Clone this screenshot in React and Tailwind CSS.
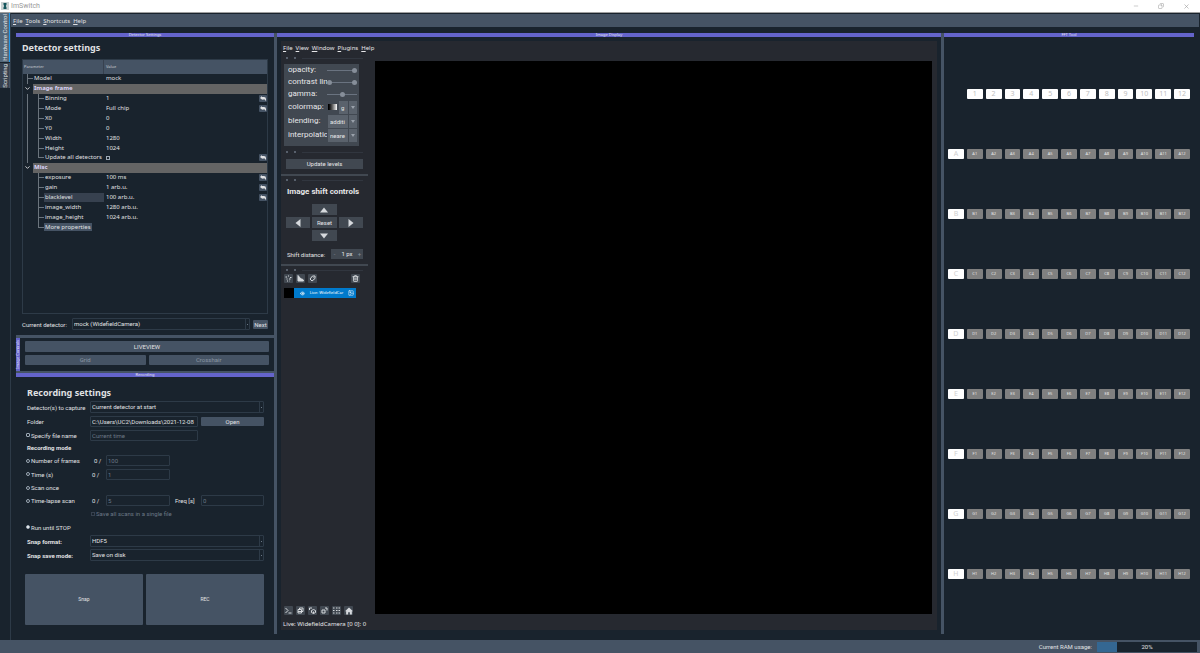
import React from "react";
import { ChevronDown, Image, Eye, Trash2, Minus, X, Copy } from "lucide-react";

const params = [
  { name: "Model", value: "mock", level: 0 },
  { name: "Image frame", group: true },
  { name: "Binning", value: "1", level: 1, reset: true, trunk: true },
  { name: "Mode", value: "Full chip", level: 1, reset: true, trunk: true },
  { name: "X0", value: "0", level: 1, trunk: true },
  { name: "Y0", value: "0", level: 1, trunk: true },
  { name: "Width", value: "1280", level: 1, trunk: true },
  { name: "Height", value: "1024", level: 1, trunk: true },
  { name: "Update all detectors", check: true, level: 1, reset: true, trunk: true, last: true },
  { name: "Misc", group: true },
  { name: "exposure", value: "100 ms", level: 1, reset: true },
  { name: "gain", value: "1 arb.u.", level: 1, reset: true },
  { name: "blacklevel", value: "100 arb.u.", level: 1, reset: true, hover: true },
  { name: "image_width", value: "1280 arb.u.", level: 1 },
  { name: "image_height", value: "1024 arb.u.", level: 1 },
  { name: "More properties", button: true, level: 1, last: true },
];

const columns = [1, 2, 3, 4, 5, 6, 7, 8, 9, 10, 11, 12];
const wellRows = ["A", "B", "C", "D", "E", "F", "G", "H"];

function DockTitle({ children }) {
  return (
    <div className="flex h-[4px] shrink-0 items-center justify-center bg-[#6464cb] font-['Noto_Sans',sans-serif] text-[4px] leading-[4px] text-[#e4e4f6]">
      {children}
    </div>
  );
}

function Menu({ items, className }) {
  return (
    <nav className={`flex items-center gap-[3px] font-['Noto_Sans',sans-serif] text-[6px] ${className}`}>
      {items.map((item) => (
        <button key={item} className="leading-[10px]">
          <span className="underline">{item[0]}</span>
          {item.slice(1)}
        </button>
      ))}
    </nav>
  );
}

function Branch({ last, className }) {
  return (
    <span className={`flex w-[6px] shrink-0 flex-col self-stretch ${className}`}>
      <span className="flex-1 border-b border-l border-[#6b747d]" />
      <span className={last ? "flex-1" : "flex-1 border-l border-[#6b747d]"} />
    </span>
  );
}

function ParamRow({ row }) {
  if (row.group) {
    return (
      <tr className="flex items-stretch">
        <td className="flex w-[10px] items-center pl-px">
          <ChevronDown className="size-[7px] text-[#e0e1e3]" strokeWidth={3} />
        </td>
        <td className="flex flex-1 items-center bg-[#646464] pl-px font-bold text-[#dcd6fa]">{row.name}</td>
      </tr>
    );
  }
  return (
    <tr className="flex items-stretch">
      <td className="flex w-[81px] items-center whitespace-nowrap">
        {row.level === 0 ? (
          <Branch className="ml-[4px]" />
        ) : (
          <>
            <span className={`ml-[4px] w-[6px] shrink-0 self-stretch ${row.trunk ? "border-l border-[#6b747d]" : ""}`} />
            <Branch last={row.last} className="ml-[5px]" />
          </>
        )}
        {row.button ? (
          <button className="bg-[#455364] px-px leading-[8px]">{row.name}</button>
        ) : (
          <span className={`flex flex-1 items-center self-stretch pl-px ${row.hover ? "bg-[#37414f]" : ""}`}>
            {row.check ? <label htmlFor="update-all">{row.name}</label> : row.name}
          </span>
        )}
      </td>
      <td className="flex flex-1 items-center justify-between pl-[2px]">
        {row.check ? (
          <input id="update-all" type="checkbox" className="size-[4px] appearance-none border border-[#9da9b5]" />
        ) : (
          <span>{row.value}</span>
        )}
        {row.reset && (
          <button aria-label={`Reset ${row.name}`} className="flex h-[7px] w-[8px] items-center justify-center rounded-[1px] bg-[#455364]">
            <svg viewBox="0 0 6 5" className="h-[5px] w-[6px]" fill="#e0e1e3">
              <path d="M0 2 2 0v1h2a2 2 0 0 1 2 2v1.500H5V3.500H2.500V4z" />
            </svg>
          </button>
        )}
      </td>
    </tr>
  );
}

function DetectorSettings() {
  return (
    <section className="flex flex-1 flex-col">
      <DockTitle>Detector Settings</DockTitle>
      <div className="flex flex-1 flex-col px-[6px] pb-[5px]">
        <h2 className="h-[22px] font-['Noto_Sans',sans-serif] text-[9px] leading-[22px] font-bold">Detector settings</h2>
        <div className="flex-1 border border-[#2d3a47] font-['Noto_Sans',sans-serif]">
          <table className="block w-full">
            <thead className="block">
              <tr className="flex h-[14px] items-center bg-[#455364] text-left text-[4px] text-[#c9cdd2]">
                <th className="w-[81px] border-r border-[#37414f] pl-px leading-[14px] font-normal">Parameter</th>
                <th className="pl-[2px] font-normal">Value</th>
              </tr>
            </thead>
            <tbody className="grid h-[158px] auto-rows-fr text-[6px] leading-[9px]">
              {params.map((row) => (
                <ParamRow key={row.name} row={row} />
              ))}
            </tbody>
          </table>
        </div>
        <div className="mt-[4px] flex h-[12px] items-center">
          <label htmlFor="detector" className="w-[50px] text-[6px]">Current detector:</label>
          <Combo id="detector" value="mock (WidefieldCamera)" />
          <button className="ml-[3px] h-[9px] w-[15px] rounded-[1px] bg-[#455364] text-[6px] leading-[9px]">Next</button>
        </div>
      </div>
    </section>
  );
}

function Combo({ id, value }) {
  return (
    <div className="flex h-[12px] flex-1 items-stretch rounded-[1px] border border-[#2d3a47]">
      <select id={id} className="min-w-0 flex-1 appearance-none px-px text-[6px] leading-[10px]">
        <option>{value}</option>
      </select>
      <span className="flex w-[4px] items-center justify-center border-l border-[#2d3a47]">
        <span className="size-px bg-[#6b7886]" />
      </span>
    </div>
  );
}

function ImageControls() {
  return (
    <section className="flex h-[33px] shrink-0">
      <div className="flex w-[4px] items-center justify-center bg-[#6464cb]">
        <span className="rotate-180 font-['Noto_Sans',sans-serif] text-[4px] leading-[4px] whitespace-nowrap text-[#e4e4f6] [writing-mode:vertical-rl]">
          Image Controls
        </span>
      </div>
      <div className="grid flex-1 grid-cols-2 content-start gap-[3px] px-[5px] pt-[3px] text-[6px] leading-[10px]">
        <button className="col-span-2 h-[11px] rounded-[1px] bg-[#455364]">LIVEVIEW</button>
        <button className="h-[10px] rounded-[1px] bg-[#455364] text-[#8a96a3]">Grid</button>
        <button className="h-[10px] rounded-[1px] bg-[#455364] text-[#8a96a3]">Crosshair</button>
      </div>
    </section>
  );
}

function Field({ className, ...props }) {
  return (
    <input
      className={`h-[11px] min-w-0 rounded-[1px] border border-[#2d3a47] px-px text-[6px] leading-[9px] placeholder:text-[#6b7886] ${className}`}
      {...props}
    />
  );
}

function Mode({ id, label, checked }) {
  return (
    <label htmlFor={id} className="-ml-px flex w-[64px] items-center gap-px">
      <input
        id={id}
        type="radio"
        name="mode"
        defaultChecked={checked}
        className="size-[4px] appearance-none rounded-full border border-[#9da9b5] checked:bg-white"
      />
      {label}
    </label>
  );
}

function Recording() {
  return (
    <section className="flex h-[261px] shrink-0 flex-col">
      <DockTitle>Recording</DockTitle>
      <div className="flex flex-1 flex-col pr-[10px] pl-[11px] text-[6px]">
        <h2 className="h-[23px] pt-[6px] font-['Noto_Sans',sans-serif] text-[9px] leading-[20px] font-bold">Recording settings</h2>
        <div className="flex h-[14px] items-center">
          <label htmlFor="capture" className="w-[63px]">Detector(s) to capture</label>
          <Combo id="capture" value="Current detector at start" />
        </div>
        <div className="flex h-[14px] items-center">
          <label htmlFor="folder" className="w-[63px]">Folder</label>
          <Field id="folder" className="w-[108px]" defaultValue="C:\Users\UC2\Downloads\2021-12-08" />
          <button className="ml-[3px] h-[9px] flex-1 rounded-[1px] bg-[#455364]">Open</button>
        </div>
        <div className="flex h-[14px] items-center">
          <label htmlFor="specify" className="-ml-px flex w-[64px] items-center gap-px">
            <input id="specify" type="checkbox" className="size-[4px] appearance-none rounded-[1px] border border-[#9da9b5]" />
            Specify file name
          </label>
          <Field aria-label="File name" className="w-[108px]" placeholder="Current time" />
        </div>
        <h3 className="h-[12px] leading-[12px] font-bold">Recording mode</h3>
        <div className="flex h-[13px] items-center">
          <Mode id="frames" label="Number of frames" />
          <span className="w-[16px] pl-[4px]">0 /</span>
          <Field aria-label="Frames" className="w-[64px]" placeholder="100" />
        </div>
        <div className="flex h-[14px] items-center">
          <Mode id="time" label="Time (s)" />
          <span className="w-[16px] pl-[2px]">0 /</span>
          <Field aria-label="Seconds" className="w-[64px]" placeholder="1" />
        </div>
        <div className="flex h-[13px] items-center">
          <Mode id="scan" label="Scan once" />
        </div>
        <div className="flex h-[13px] items-center">
          <Mode id="lapse" label="Time-lapse scan" />
          <span className="w-[16px] pl-[2px]">0 /</span>
          <Field aria-label="Time points" className="w-[64px]" placeholder="5" />
          <label htmlFor="freq" className="w-[31px] pl-[5px]">Freq [s]</label>
          <Field id="freq" className="flex-1" placeholder="0" />
        </div>
        <div className="flex h-[13px] items-center pl-[64px]">
          <label htmlFor="single" className="flex items-center gap-px text-[#6b7886]">
            <input id="single" type="checkbox" disabled className="size-[4px] appearance-none border border-[#37414f]" />
            Save all scans in a single file
          </label>
        </div>
        <div className="flex h-[14px] items-center">
          <Mode id="stop" label="Run until STOP" checked />
        </div>
        <div className="flex h-[14px] items-center">
          <label htmlFor="format" className="w-[63px] font-bold">Snap format:</label>
          <Combo id="format" value="HDF5" />
        </div>
        <div className="flex h-[14px] items-center">
          <label htmlFor="save" className="w-[63px] font-bold">Snap save mode:</label>
          <Combo id="save" value="Save on disk" />
        </div>
        <div className="mt-[12px] -ml-[2px] grid h-[51px] grid-cols-2 gap-[3px] text-[5px]">
          <button className="rounded-[1px] bg-[#455364]">Snap</button>
          <button className="rounded-[1px] bg-[#455364]">REC</button>
        </div>
      </div>
    </section>
  );
}

function Grip() {
  return (
    <div className="flex h-[6px] items-center gap-[6px] px-[5px]">
      <span className="size-[2px] rounded-full bg-[#6a7380]" />
      <span className="size-[2px] rounded-full bg-[#6a7380]" />
      <span className="h-px flex-1 bg-[#31363f]" />
    </div>
  );
}

function Slider({ label, range, value }) {
  return (
    <div className="flex h-[12px] items-center">
      <span className="w-[39px] overflow-hidden whitespace-nowrap">{label}</span>
      <div className="flex flex-1 items-center" role="group" aria-label={label}>
        {range && <span className="size-[5px] shrink-0 rounded-full bg-[#868e99]" />}
        <input
          type="range"
          aria-label={label}
          defaultValue={value}
          className="h-[5px] w-full min-w-0 appearance-none bg-linear-to-b from-transparent from-40% via-[#6a7380] via-50% to-transparent to-60% [&::-webkit-slider-thumb]:size-[5px] [&::-webkit-slider-thumb]:appearance-none [&::-webkit-slider-thumb]:rounded-full [&::-webkit-slider-thumb]:bg-[#868e99]"
        />
      </div>
    </div>
  );
}

function Drop({ label, value, swatch }) {
  return (
    <div className="flex h-[14px] items-center">
      <label htmlFor={label} className="mr-px w-[39px] shrink-0 overflow-hidden whitespace-nowrap">{label}</label>
      {swatch && <span className="mr-[2px] h-[6px] w-[9px] bg-linear-to-r from-black to-white" />}
      <div className="flex h-[13px] min-w-0 flex-1 items-center bg-[#5a626c]">
        <select id={label} className="min-w-0 flex-1 appearance-none pl-[2px] text-[6px]">
          <option>{value}</option>
        </select>
        <span className="flex h-full w-[9px] items-center justify-center border-l border-[#414851]">
          <svg viewBox="0 0 4 3" className="h-[3px] w-[4px]" fill="#9aa1aa"><path d="M0 0h4L2 3z" /></svg>
        </span>
      </div>
    </div>
  );
}

function Arrow({ label, d, className }) {
  return (
    <button aria-label={label} className={`flex h-[11px] items-center justify-center bg-[#414851] ${className}`}>
      <svg viewBox="0 0 8 8" className="size-[8px]" fill="#d6d9dd"><path d={d} /></svg>
    </button>
  );
}

function ToolButton({ label, children }) {
  return (
    <button aria-label={label} className="flex size-[9px] items-center justify-center rounded-[1px] bg-[#414851] text-[#d6d9dd]">
      {children}
    </button>
  );
}

function Glyph({ children }) {
  return (
    <svg viewBox="0 0 14 14" className="size-[7px]" fill="none" stroke="currentColor" strokeWidth="2">
      {children}
    </svg>
  );
}

function Napari() {
  return (
    <div className="mx-[4px] mt-[4px] mb-[4px] flex flex-1 flex-col bg-[#262930] text-[#e6e6e8]">
      <Menu items={["File", "View", "Window", "Plugins", "Help"]} className="h-[14px] px-[2px]" />
      <div className="flex flex-1">
        <aside className="flex w-[94px] shrink-0 flex-col pr-[7px]">
          <Grip />
          <div className="mt-[3px] mr-[9px] ml-[3px] flex h-[82px] flex-col bg-[#414851] pr-[2px] pl-[4px] text-[8px]">
            <Slider label="opacity:" value={100} />
            <Slider label="contrast limits:" range value={100} />
            <Slider label="gamma:" value={50} />
            <Drop label="colormap:" value="g" swatch />
            <Drop label="blending:" value="additi" />
            <Drop label="interpolation:" value="neare" />
          </div>
          <div className="pt-[3px]"><Grip /></div>
          <button className="mt-[4px] mr-[5px] ml-[5px] h-[10px] bg-[#414851] text-[6px] leading-[10px]">Update levels</button>
          <div className="mt-[5px] h-[2px] bg-[#414851]" />
          <div className="pt-px"><Grip /></div>
          <h2 className="mt-[3px] pl-[6px] text-[8px] leading-[12px] font-bold whitespace-nowrap">Image shift controls</h2>
          <div className="mt-[6px] mr-[5px] ml-[5px] grid grid-cols-3 gap-[2px] text-[6px]">
            <Arrow label="Up" d="M4 1.5 8 6.5H0z" className="col-start-2" />
            <Arrow label="Left" d="M1.5 4 6.5 0v8z" className="col-start-1" />
            <button className="h-[11px] bg-[#414851] leading-[11px]">Reset</button>
            <Arrow label="Right" d="M6.5 4 1.5 0v8z" className="" />
            <Arrow label="Down" d="M4 6.5 0 1.5h8z" className="col-start-2" />
          </div>
          <div className="mt-[8px] mr-[5px] ml-[6px] flex items-center justify-between text-[6px]">
            <label htmlFor="shift">Shift distance:</label>
            <div className="flex h-[10px] w-[32px] items-center bg-[#414851]">
              <button aria-label="Less" className="w-[7px] leading-[10px] text-[#868e99]">-</button>
              <input id="shift" defaultValue="1 px" className="w-[18px] text-center leading-[10px]" />
              <button aria-label="More" className="w-[7px] leading-[10px] text-[#868e99]">+</button>
            </div>
          </div>
          <div className="mt-[5px] h-[2px] bg-[#414851]" />
          <div className="pt-px"><Grip /></div>
          <div className="mt-px mr-[8px] ml-[3px] flex gap-[3px]">
            <ToolButton label="New points layer">
              <Glyph><path d="M1 4h3M6 2h2M10 5h3M3 8h2M8 8h3M4 12h2M9 12h1" /></Glyph>
            </ToolButton>
            <ToolButton label="New shapes layer">
              <Glyph><path d="M2 1v11h11a4 4 0 0 0-5-4z" fill="currentColor" /></Glyph>
            </ToolButton>
            <ToolButton label="New labels layer">
              <Glyph><path d="M7 2h5v5l-6 5-4-4zM9 5h1" /></Glyph>
            </ToolButton>
            <span className="flex-1" />
            <ToolButton label="Delete layer"><Trash2 className="size-[7px]" strokeWidth={3} /></ToolButton>
          </div>
          <div className="mt-[5px] mr-[12px] ml-[3px] flex h-[10px]">
            <span className="w-[10px] bg-black" />
            <div className="flex flex-1 items-center justify-between bg-[#007acc] pr-[2px] pl-[6px] font-['Noto_Sans',sans-serif] text-[4px] leading-[10px] whitespace-nowrap text-white">
              <Eye className="size-[5px] shrink-0" strokeWidth={3} />
              <span>Live: WidefieldCar</span>
              <Image className="size-[6px] shrink-0" />
            </div>
          </div>
          <div className="mt-auto ml-[3px] flex gap-[3px]">
            <ToolButton label="Console">
              <Glyph><path d="M1 2l5 5-5 5M7 12h6" /></Glyph>
            </ToolButton>
            <ToolButton label="Toggle 3D">
              <Glyph><path d="M2 5h7v7H2zM5 5V2h7v7H9M2 9h7" /></Glyph>
            </ToolButton>
            <ToolButton label="Roll dimensions">
              <Glyph><path d="M5 7l4-2 4 2v4l-4 2-4-2zM9 9v4M1 6V2h5" /></Glyph>
            </ToolButton>
            <ToolButton label="Transpose">
              <Glyph><path d="M2 6h6v6H2zM8 2h4v5" /></Glyph>
            </ToolButton>
            <ToolButton label="Grid">
              <Glyph><path d="M0 2h3M6 2h3M11 2h3M0 7h3M6 7h3M11 7h3M0 12h3M6 12h3M11 12h3" /></Glyph>
            </ToolButton>
            <ToolButton label="Home">
              <svg viewBox="0 0 14 14" className="size-[8px]" fill="currentColor">
                <path d="M7 1 0 7.500h2V13h3.500V9h3v4H12V7.500h2z" />
              </svg>
            </ToolButton>
          </div>
        </aside>
        <div className="mt-[6px] mr-[5px] mb-px flex-1 bg-black" />
      </div>
      <div className="h-[15px] px-[2px] font-['Noto_Sans',sans-serif] text-[6px] leading-[19px]">Live: WidefieldCamera [0 0]: 0</div>
    </div>
  );
}

function WellPlate() {
  return (
    <div className="flex flex-1 flex-col pt-[27px] pr-[4px] pb-[30px] pl-[4px] font-['Noto_Sans',sans-serif]">
      <div className="grid flex-1 auto-rows-fr grid-cols-13 items-center gap-x-[3px]">
        <span />
        {columns.map((c) => (
          <button key={c} className="h-[10px] rounded-[1px] bg-white text-[7px] leading-[10px] text-[#c0c0c0]">{c}</button>
        ))}
        {wellRows.map((r) => (
          <React.Fragment key={r}>
            <button className="h-[10px] rounded-[1px] bg-white text-[7px] leading-[10px] text-[#d0d0d0]">{r}</button>
            {columns.map((c) => (
              <button key={c} className="h-[10px] rounded-[1px] bg-[#808080] text-[4px] leading-[10px] text-[#e6e6e6]">
                {r}{c}
              </button>
            ))}
          </React.Fragment>
        ))}
      </div>
    </div>
  );
}

export default function App() {
  return (
    <div className="flex h-screen flex-col overflow-hidden bg-[#19232d] font-[Roboto,sans-serif] text-[#e0e1e3]">
      <header className="flex h-[13px] shrink-0 items-center border-b border-[#a0a0a0] bg-white text-[#999999]">
        <svg viewBox="0 0 8 8" className="ml-px size-[8px]">
          <path d="M0 0h8v8H0z" fill="#c9d2d2" />
          <path d="M2.5 1h3v1.5L4.8 4l.7 1.5V7h-3V5.500L3.200 4l-.7-1.500z" fill="#14555c" />
        </svg>
        <h1 className="ml-[2px] text-[7px]">ImSwitch</h1>
        <div className="ml-auto flex items-center gap-[19px] pr-[10px]">
          <button aria-label="Minimize"><Minus className="size-[6px]" /></button>
          <button aria-label="Restore"><Copy className="size-[6px] -scale-x-100" /></button>
          <button aria-label="Close"><X className="size-[7px]" /></button>
        </div>
      </header>
      <div className="flex min-h-0 flex-1">
        <div className="flex w-[10px] shrink-0 flex-col gap-px text-[6px] leading-[9px]">
          <button className="flex h-[49px] items-center justify-center border-r border-[#259ae9] bg-[#54687a]">
            <span className="rotate-180 whitespace-nowrap [writing-mode:vertical-rl]">Hardware Control</span>
          </button>
          <button className="flex h-[25px] items-center justify-center border-r border-[#455364] bg-[#37414f]">
            <span className="rotate-180 whitespace-nowrap [writing-mode:vertical-rl]">Scripting</span>
          </button>
        </div>
        <div className="mr-px flex flex-1 flex-col border-l border-[#2d3a47] pt-px">
          <Menu items={["File", "Tools", "Shortcuts", "Help"]} className="h-[13px] shrink-0 bg-[#455364] px-[2px]" />
          <main className="flex min-h-0 flex-1 px-[5px] pt-[6px] pb-[6px]">
            <div className="flex w-[258px] shrink-0 flex-col">
              <DetectorSettings />
              <div className="h-[3px] shrink-0 bg-[#455364]" />
              <ImageControls />
              <div className="h-[2px] shrink-0 bg-[#455364]" />
              <Recording />
            </div>
            <div className="w-[3px] shrink-0 bg-[#455364]" />
            <div className="flex flex-1 flex-col">
              <DockTitle>Image Display</DockTitle>
              <Napari />
            </div>
            <div className="w-[3px] shrink-0 bg-[#455364]" />
            <div className="flex w-[250px] shrink-0 flex-col">
              <DockTitle>FFT Tool</DockTitle>
              <WellPlate />
            </div>
          </main>
        </div>
      </div>
      <footer className="flex h-[13px] shrink-0 items-center justify-end bg-[#455364] pr-[3px] text-[6px]">
        <label htmlFor="ram">Current RAM usage:</label>
        <div id="ram" role="progressbar" aria-valuenow={20} className="ml-[5px] flex h-[10px] w-[100px] items-center bg-linear-to-r from-[#346792] from-20% to-[#19232d] to-20%">
          <span className="flex-1 text-center">20%</span>
        </div>
      </footer>
    </div>
  );
}
